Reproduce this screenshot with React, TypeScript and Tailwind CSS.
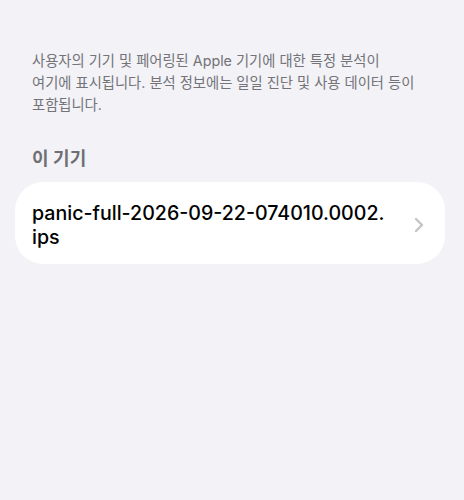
export default function App() {
  return (
    <div
      className="min-h-[500px] w-full bg-[#f2f2f7] pt-[50px]"
      style={{ fontFamily: 'Inter, "Noto Sans CJK KR", sans-serif' }}
    >
      <p className="px-8 text-[14.3px] leading-[22px] text-[#737378]">
        사용자의 기기 및 페어링된 Apple 기기에 대한 특정 분석이
        <br />
        여기에 표시됩니다. 분석 정보에는 일일 진단 및 사용 데이터 등이
        <br />
        포함됩니다.
      </p>

      <h2 className="mt-[31px] px-8 text-[18px] font-semibold leading-[24px] text-[#6e6e73]">
        이 기기
      </h2>

      <div className="ml-[15px] mr-[19px] mt-[11px] flex items-center justify-between rounded-[28px] bg-white pb-[15px] pl-[17px] pr-[21px] pt-[19px]">
        <div className="text-[19.6px] font-medium leading-[24px] text-black">
          panic-full-2026-09-22-074010.0002.
          <br />
          ips
        </div>
        <svg width="10" height="16" viewBox="0 0 10 16" className="shrink-0">
          <path
            d="M2 2l6 6-6 6"
            fill="none"
            stroke="#c4c4c7"
            strokeWidth="2.4"
            strokeLinecap="round"
            strokeLinejoin="round"
          />
        </svg>
      </div>
    </div>
  );
}
